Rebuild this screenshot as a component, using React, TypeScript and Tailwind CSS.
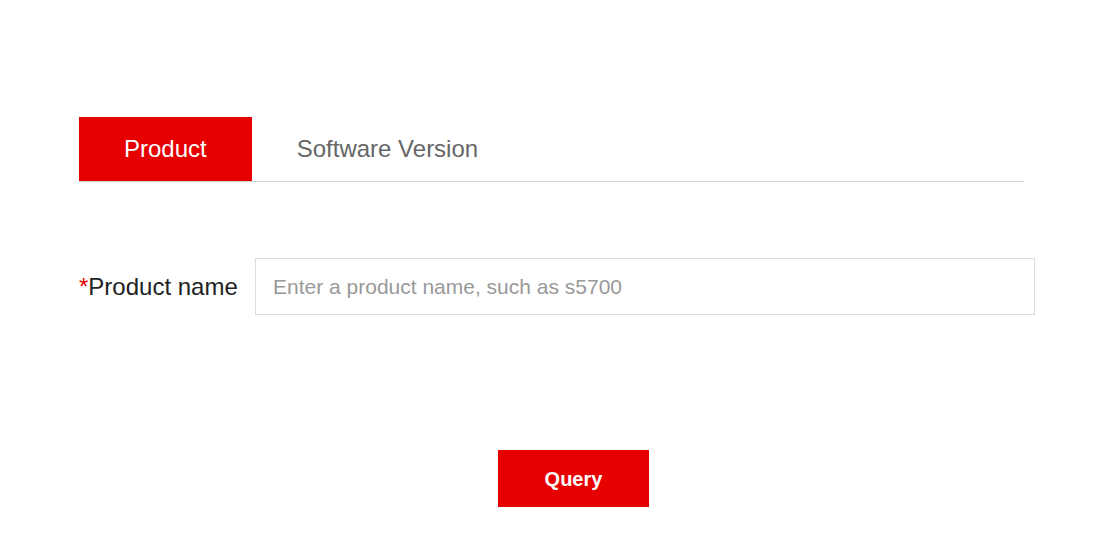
import { useState } from "react";

const tabs = ["Product", "Software Version"];

export default function App() {
  const [active, setActive] = useState(0);
  const [name, setName] = useState("");

  return (
    <div className="min-h-screen bg-white font-['Liberation_Sans',Arial,sans-serif]">
      <div className="pl-[79px] pr-[76px] pt-[117px]">
        <div className="flex w-[945px] border-b border-[#d0d0d0]">
          {tabs.map((t, i) => (
            <button
              key={t}
              onClick={() => setActive(i)}
              className={
                i === active
                  ? "h-[64px] bg-[#e60000] px-[45px] text-[24px] text-white"
                  : "h-[64px] px-[45px] text-[24px] text-[#666666]"
              }
            >
              {t}
            </button>
          ))}
        </div>

        <div className="mt-[76px] flex items-center">
          <label className="w-[176px] text-[24px] text-[#222222]">
            <span className="text-[#e60000]">*</span>Product name
          </label>
          <input
            value={name}
            onChange={(e) => setName(e.target.value)}
            placeholder="Enter a product name, such as s5700"
            className="h-[57px] w-[780px] border border-[#dddddd] px-[17px] text-[21px] text-[#333333] outline-none placeholder:text-[#999999]"
          />
        </div>

        <div className="mt-[135px]">
          <button className="ml-[419px] h-[57px] w-[151px] bg-[#e60000] text-[20px] font-bold text-white">
            Query
          </button>
        </div>
      </div>
    </div>
  );
}
